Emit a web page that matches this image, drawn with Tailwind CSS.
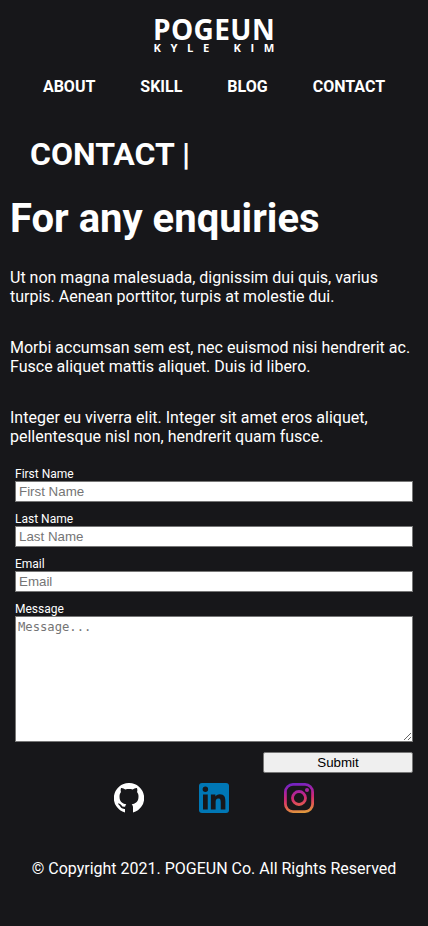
<!DOCTYPE html>
<html lang="en">
<head>
<meta charset="utf-8">
<meta name="viewport" content="width=device-width, initial-scale=1">
<title>Contact</title>
<script src="https://cdn.jsdelivr.net/npm/@tailwindcss/browser@4"></script>
</head>
<body class="h-[926px] overflow-hidden bg-[#17171a] font-['Roboto',sans-serif] text-base leading-[19px] text-white">
<header class="flex flex-col items-center pt-[15px]">
  <div class="flex h-[43px] w-[121px] flex-col items-center font-['Open_Sans',sans-serif] font-bold whitespace-nowrap">
    <div class="text-[28px] leading-[28px] tracking-[0.4px]">POGEUN</div>
    <div class="flex h-[10px] w-[121px] justify-between text-[11.2px] leading-[10px]">
      <span>K</span><span>Y</span><span>L</span><span>E</span><span class="w-[5px]"></span><span>K</span><span>I</span><span>M</span>
    </div>
  </div>
  <nav class="mt-[19px] flex gap-[45px] font-bold">
    <a>ABOUT</a><a>SKILL</a><a>BLOG</a><a>CONTACT</a>
  </nav>
</header>
<main>
  <h2 class="mt-[39px] pl-[30px] text-[32px] leading-[38px] font-bold">CONTACT |</h2>
  <h1 class="mt-[22px] pl-[10px] text-[40px] leading-[47px] font-bold">For any enquiries</h1>
  <div class="mt-[26px] flex flex-col gap-8 pl-[10px]">
    <p>Ut non magna malesuada, dignissim dui quis, varius<br>turpis. Aenean porttitor, turpis at molestie dui.</p>
    <p>Morbi accumsan sem est, nec euismod nisi hendrerit ac.<br>Fusce aliquet mattis aliquet. Duis id libero.</p>
    <p>Integer eu viverra elit. Integer sit amet eros aliquet,<br>pellentesque nisl non, hendrerit quam fusce.</p>
  </div>
  <form class="mt-[21px] flex flex-col gap-[10px] px-[15px] text-xs leading-[14px]">
    <label class="flex flex-col">First Name
      <input class="h-[21px] border border-[#767676] bg-white px-[3px] font-['Liberation_Sans',sans-serif] text-[13.333px] placeholder:text-[#757575]" placeholder="First Name">
    </label>
    <label class="flex flex-col">Last Name
      <input class="h-[21px] border border-[#767676] bg-white px-[3px] font-['Liberation_Sans',sans-serif] text-[13.333px] placeholder:text-[#757575]" placeholder="Last Name">
    </label>
    <label class="flex flex-col">Email
      <input class="h-[21px] border border-[#767676] bg-white px-[3px] font-['Liberation_Sans',sans-serif] text-[13.333px] placeholder:text-[#757575]" placeholder="Email">
    </label>
    <label class="flex flex-col">Message
      <textarea class="h-[126px] resize border border-[#767676] bg-white px-[2px] pt-[3px] font-['DejaVu_Sans_Mono',monospace] text-[12.2px] leading-[15px] placeholder:text-[#757575]" placeholder="Message..."></textarea>
    </label>
    <button type="button" class="h-[21px] w-[150px] self-end rounded-[2px] border border-[#767676] bg-[#efefef] font-['Liberation_Sans',sans-serif] text-[13.333px] text-black">Submit</button>
  </form>
</main>
<footer class="flex flex-col items-center pt-[10px]">
  <div class="flex gap-[55px]">
    <svg class="size-[30px]" viewBox="0 0 30 30"><path fill="#fff" d="M15 0A15 15 0 0 0 11 29.5V25.9C7.7 26.1 6.8 24.8 5.9 23.1C5.4 22.1 4.9 21.7 4.2 21.2C3.8 20.9 4 20.5 4.6 20.5C6 20.5 6.8 21.5 7.6 22.6C8.6 24 9.7 23.9 11.2 23.5C11.4 22.6 11.7 21.9 12.3 21.3C8 20.6 5.5 18.5 5.5 13.5C5.5 11.6 6 10.3 7 9.1C6.5 7.8 6.6 6.2 7.1 5C8.7 4.8 10 5.7 11.3 6.5C13.7 5.9 16.3 5.9 18.7 6.5C20 5.7 21.3 4.8 22.9 5C23.4 6.2 23.5 7.8 23 9.1C24 10.3 24.5 11.6 24.5 13.5C24.5 18.5 22 20.6 17.7 21.3C18.6 22.2 19 23.2 19 24.6V29.5A15 15 0 0 0 15 0Z"/></svg>
    <svg class="size-[30px] rounded-[3px]" viewBox="0 0 24 24" fill="#0077b5"><path d="M21.1 21.1h-3.7v-5.7c0-1.4-.1-3.1-1.9-3.1-1.9 0-2.2 1.5-2.2 3v5.8H9.5V9.2h3.6v1.6c.5-.9 1.8-1.9 3.5-1.9 3.8 0 4.5 2.5 4.5 5.7zM5.1 7.2a2.2 2.2 0 1 1 0-4.4 2.2 2.2 0 0 1 0 4.4zM7 21.1H3.2V9.2H7zM0 0V24H24V0z"/></svg>
    <svg class="size-[30px]" viewBox="0 0 30 30" fill="none">
      <defs><linearGradient id="ig" gradientUnits="userSpaceOnUse" x1="13" y1="0" x2="17" y2="30"><stop offset="0" stop-color="#7024c4"/><stop offset=".25" stop-color="#a322a5"/><stop offset=".5" stop-color="#d02a73"/><stop offset=".75" stop-color="#e15b50"/><stop offset="1" stop-color="#e09b3d"/></linearGradient></defs>
      <rect x="1.4" y="1.4" width="27.2" height="27.2" rx="7.6" stroke="url(#ig)" stroke-width="2.8"/>
      <circle cx="15" cy="15" r="6.5" stroke="url(#ig)" stroke-width="2.8"/>
      <circle cx="23" cy="7.1" r="2" fill="url(#ig)"/>
    </svg>
  </div>
  <p class="mt-[46px]">© Copyright 2021. POGEUN Co. All Rights Reserved</p>
</footer>
</body>
</html>
